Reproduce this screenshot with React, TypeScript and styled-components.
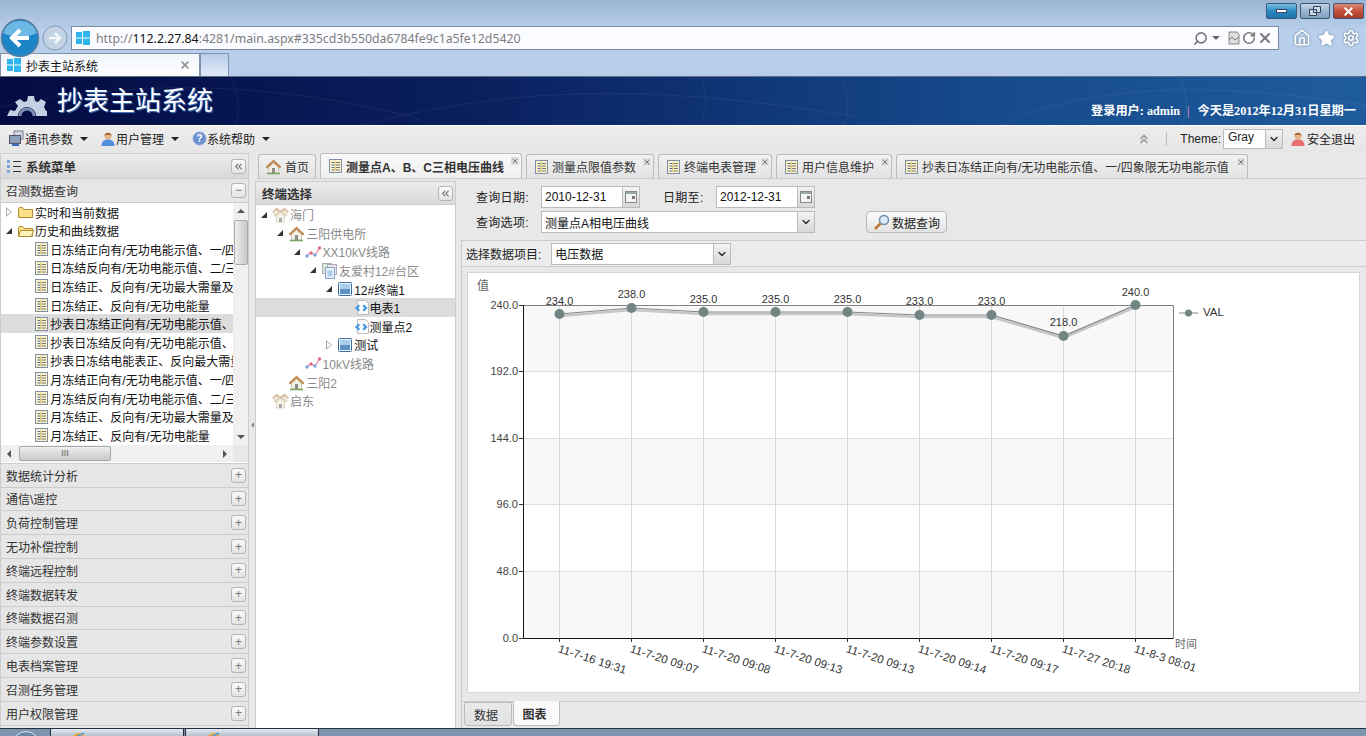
import type { ReactNode } from "react";
import styled, { createGlobalStyle } from "styled-components";
import { ChevronDown, ChevronsLeft, ChevronsUp, Home, RotateCw, Search, Settings, Star, X } from "lucide-react";

const GlobalStyle = createGlobalStyle`
  html, body {
    margin: 0;
    padding: 0;
    background: #e8e8e8;
  }
  * {
    box-sizing: border-box;
  }
  body {
    font-family: "Liberation Sans", "Noto Sans CJK SC", sans-serif;
    font-size: 12px;
    color: #222;
  }
`;

const Page = styled.div`
  width: 1366px;
  height: 736px;
  overflow: hidden;
  display: flex;
  flex-direction: column;
`;

/* ---------- browser frame ---------- */

const Chrome = styled.div`
  height: 77px;
  flex: none;
  background: linear-gradient(#9ab4d3, #b9d0ec 40%, #b7cde9);
  border-bottom: 1px solid #5d6f88;
`;

const TitleRow = styled.div`
  height: 26px;
  display: flex;
  justify-content: flex-end;
  gap: 3px;
  padding: 3px 2px 0 0;
`;

const WinButton = styled.div<{ $tone: string }>`
  width: ${(p) => (p.$tone === "gray" ? "30px" : "31px")};
  height: 16px;
  border: 1px solid #3b5a7a;
  border-radius: 2px;
  display: flex;
  align-items: center;
  justify-content: center;
  background: ${(p) =>
    p.$tone === "red"
      ? "linear-gradient(#dd8a78, #c2523d 50%, #a83a28)"
      : p.$tone === "blue"
        ? "linear-gradient(#7cc1e6, #2a8ac4 50%, #1f6fa8)"
        : "linear-gradient(#c4d5e8, #9db7d2 50%, #7f9dbc)"};
`;

const MinGlyph = styled.span`
  width: 11px;
  height: 4px;
  background: #fff;
  border: 1px solid #446;
`;

const AddressRow = styled.div`
  height: 27px;
  display: flex;
  align-items: flex-start;
  position: relative;
`;

const NavSlot = styled.div`
  width: 71px;
  height: 26px;
  flex: none;
`;

const NavIcons = styled.svg`
  position: absolute;
  left: 0;
  top: -8px;
`;

const AddressBar = styled.div`
  width: 1208px;
  height: 24px;
  background: #fbfcff;
  border: 1px solid #7a8aa0;
  display: flex;
  align-items: center;
  padding: 0 5px 0 4px;
  color: #7d7d7d;
  font-family: "Noto Sans", sans-serif;
  font-size: 12.3px;
`;

const Url = styled.span`
  margin-left: 6px;
  flex: 1;
  b {
    font-weight: 400;
    color: #111;
  }
`;

const BarTools = styled.div`
  display: flex;
  align-items: center;
  gap: 1px;
  color: #777;
`;

const Caret = styled.span`
  width: 0;
  height: 0;
  border: 4px solid transparent;
  border-top-color: #666;
  border-bottom: 0;
  margin: 0 6px 0 3px;
`;

const BrowserTools = styled.div`
  display: flex;
  align-items: center;
  gap: 7px;
  margin-left: 14px;
  height: 24px;
  svg {
    filter: drop-shadow(0 0 1px #5f738c);
  }
`;

const TabRow = styled.div`
  height: 23px;
  display: flex;
  align-items: flex-end;
`;

const BrowserTab = styled.div`
  width: 200px;
  height: 23px;
  background: linear-gradient(#f1f5fb, #fff);
  border: 1px solid #7f93ad;
  border-bottom: 0;
  display: flex;
  align-items: center;
  padding: 0 8px 0 6px;
  gap: 5px;
  color: #111;
  span {
    flex: 1;
  }
`;

const NewTab = styled.div`
  width: 29px;
  height: 23px;
  background: linear-gradient(#b7cde9, #e1ebf7);
  border: 1px solid #7f93ad;
  border-bottom: 0;
`;

/* ---------- application banner ---------- */

const Banner = styled.div`
  height: 48px;
  flex: none;
  background: linear-gradient(90deg, #040c42, #0a1f5e 35%, #15488a 70%, #1f5c9e);
  display: flex;
  align-items: flex-end;
  justify-content: space-between;
  padding: 0 10px 0 7px;
  position: relative;
  overflow: hidden;
`;

const BannerWeb = styled.svg`
  position: absolute;
  inset: 0;
`;

const Brand = styled.div`
  display: flex;
  align-items: flex-end;
  gap: 10px;
  height: 100%;
  position: relative;
`;

const LogoWrap = styled.div`
  margin-bottom: 8px;
  height: 24px;
`;

const BrandTitle = styled.h1`
  margin: 0 0 7px;
  font-size: 26px;
  line-height: 34px;
  font-weight: 400;
  color: #fff;
  text-shadow: 1px 1px 1px #4a7fc4;
`;

const Login = styled.div`
  color: #fff;
  position: relative;
  font-family: "Liberation Serif", "Noto Sans CJK SC", serif;
  font-weight: 700;
  font-size: 12.2px;
  margin-bottom: 6px;
  i {
    font-style: normal;
    font-weight: 400;
    color: #e9a6c0;
    margin: 0 8px 0 7px;
  }
`;

/* ---------- menu bar ---------- */

const MenuBar = styled.div`
  height: 27px;
  flex: none;
  border-top: 1px solid #fff;
  background: linear-gradient(#ededed, #e6e6e6);
  display: flex;
  align-items: center;
  padding: 0 11px 0 8px;
`;

const MenuItem = styled.div`
  display: flex;
  align-items: center;
  width: 92px;
  padding-bottom: 1px;
  color: #222;
  &::after {
    content: "";
    border: 4px solid transparent;
    border-top-color: #222;
    border-bottom: 0;
    margin-left: 7px;
  }
`;

const MenuRight = styled.div`
  margin-left: auto;
  display: flex;
  align-items: center;
  color: #222;
`;

const Separator = styled.span`
  width: 1px;
  height: 14px;
  background: #bbb;
  margin: 0 13px 0 15px;
`;

const ThemeSelect = styled.div`
  width: 60px;
  height: 20px;
  margin: 0 7px 0 2px;
  background: #fff;
  border: 1px solid #bbb;
  display: flex;
  padding-left: 4px;
  line-height: 15px;
  justify-content: space-between;
`;

const ComboArrow = styled.span`
  width: 17px;
  flex: none;
  display: flex;
  align-items: center;
  justify-content: center;
  border-left: 1px solid #bbb;
  background: linear-gradient(#f4f4f4, #d8d8d8);
  color: #333;
`;

const Logout = styled.div`
  display: flex;
  align-items: center;
  gap: 1px;
  padding-bottom: 1px;
`;

/* ---------- body ---------- */

const Body = styled.div`
  height: 576px;
  flex: none;
  display: flex;
  padding-top: 1px;
`;

const West = styled.aside`
  width: 249px;
  flex: none;
  border-right: 1px solid #ccc;
  border-left: 1px solid #ccc;
  display: flex;
  flex-direction: column;
`;

const PanelHead = styled.div<{ $h: number; $pad: number }>`
  height: ${(p) => p.$h}px;
  flex: none;
  display: flex;
  align-items: center;
  padding: 0 2px 0 ${(p) => p.$pad}px;
  background: linear-gradient(#ececec, #d9d9d9);
  border-top: 1px solid #ccc;
  border-bottom: 1px solid #ccc;
  font-weight: 700;
  font-size: 12.5px;
  color: #333;
  gap: 4px;
  span {
    flex: 1;
  }
`;

const SquareBtn = styled.div`
  width: 15px;
  height: 15px;
  border: 1px solid #b5b5b5;
  border-radius: 3px;
  background: linear-gradient(#fbfbfb, #e3e3e3);
  display: flex;
  align-items: center;
  justify-content: center;
  color: #777;
  font-size: 12px;
  line-height: 1;
  font-weight: 400;
`;

const AccordionHead = styled.div`
  height: 23.8px;
  flex: none;
  display: flex;
  align-items: center;
  justify-content: space-between;
  padding: 0 2px 0 5px;
  background: #e6e6e6;
  border-bottom: 1px solid #ccc;
  color: #333;
`;

const AccordionBody = styled.div`
  height: 261px;
  flex: none;
  display: grid;
  grid-template-columns: 232px 15px;
  grid-template-rows: 242px 17px;
  background: #fff;
  border-bottom: 1px solid #ccc;
`;

const ScrollTree = styled.div`
  overflow: hidden;
`;

const TreeRow = styled.div<{ $level: number; $selected?: boolean; $muted?: boolean }>`
  height: 18.6px;
  display: flex;
  align-items: center;
  white-space: nowrap;
  padding-left: ${(p) => p.$level * 16.3}px;
  background: ${(p) => (p.$selected ? "#dcdcdc" : "transparent")};
  color: ${(p) => (p.$muted ? "#8a8a8a" : "#111")};
  svg {
    flex: none;
  }
`;

const Toggle = styled.span<{ $state: "open" | "closed" | "none" }>`
  width: 16px;
  height: 16px;
  flex: none;
  position: relative;
  display: flex;
  align-items: center;
  justify-content: center;
  &::before {
    content: "";
    display: ${(p) => (p.$state === "none" ? "none" : "block")};
    width: 0;
    height: 0;
    ${(p) =>
      p.$state === "open"
        ? "border-left: 6px solid transparent; border-bottom: 6px solid #333;"
        : "border-left: 6px solid #aaa; border-top: 5px solid transparent; border-bottom: 5px solid transparent;"}
  }
  &::after {
    content: "";
    display: ${(p) => (p.$state === "closed" ? "block" : "none")};
    position: absolute;
    left: 6px;
    top: 5px;
    width: 0;
    height: 0;
    border-left: 4px solid #fff;
    border-top: 3px solid transparent;
    border-bottom: 3px solid transparent;
  }
`;

const TreeLabel = styled.span`
  margin-left: 1px;
`;

const VScroll = styled.div`
  background: #f0f0f0;
  position: relative;
`;

const VThumb = styled.div`
  position: absolute;
  top: 17px;
  left: 1px;
  right: 0;
  height: 45px;
  background: linear-gradient(90deg, #eee, #c9c9c9);
  border: 1px solid #aaa;
  border-radius: 2px;
`;

const ArrowCell = styled.span<{ $dir: "up" | "down" | "left" | "right" }>`
  position: absolute;
  width: 0;
  height: 0;
  border: 4px solid transparent;
  ${(p) =>
    p.$dir === "up"
      ? "top: 6px; left: 4px; border-bottom-color: #555; border-top: 0;"
      : p.$dir === "down"
        ? "bottom: 6px; left: 4px; border-top-color: #555; border-bottom: 0;"
        : p.$dir === "left"
          ? "top: 5px; left: 6px; border-right-color: #555; border-left: 0;"
          : "top: 5px; right: 6px; border-left-color: #555; border-right: 0;"}
`;

const HScroll = styled.div`
  background: #f0f0f0;
  position: relative;
`;

const HThumb = styled.div`
  position: absolute;
  left: 18px;
  top: 1px;
  bottom: 1px;
  width: 92px;
  background: linear-gradient(#eee, #c9c9c9);
  border: 1px solid #aaa;
  border-radius: 2px;
  text-align: center;
  font-size: 9px;
  line-height: 13px;
  color: #666;
`;

const Corner = styled.div`
  background: #e8e8e8;
`;

const Splitter = styled.div`
  width: 7px;
  flex: none;
  display: flex;
  align-items: center;
  justify-content: center;
  padding-bottom: 32px;
  &::before {
    content: "";
    border: 3px solid transparent;
    border-right-color: #888;
    border-left: 0;
  }
`;

const Center = styled.main`
  flex: 1;
  min-width: 0;
  display: flex;
  flex-direction: column;
`;

const TabStrip = styled.div`
  height: 26px;
  flex: none;
  display: flex;
  align-items: flex-end;
  gap: 4px;
  padding-left: 2px;
  border-bottom: 1px solid #ccc;
`;

const PageTab = styled.div<{ $w: number; $active?: boolean }>`
  width: ${(p) => p.$w}px;
  height: ${(p) => (p.$active ? 25 : 24)}px;
  flex: none;
  display: flex;
  align-items: center;
  gap: 3px;
  padding-left: 6px;
  position: relative;
  border: 1px solid #bbb;
  border-bottom: 0;
  border-radius: 3px 3px 0 0;
  background: ${(p) => (p.$active ? "linear-gradient(#fafafa, #efefef)" : "linear-gradient(#f2f2f2, #e2e2e2)")};
  font-weight: ${(p) => (p.$active ? 700 : 400)};
  color: #333;
`;

const TabClose = styled.span`
  position: absolute;
  right: 1px;
  top: 2px;
  width: 10px;
  height: 10px;
  border-radius: 2px;
  background: #dcdcdc;
  border: 1px solid #f4f4f4;
  color: #777;
  display: flex;
  align-items: center;
  justify-content: center;
`;

const CenterBody = styled.div`
  flex: 1;
  display: flex;
  min-height: 0;
  padding-top: 2px;
`;

const TerminalPanel = styled.section`
  width: 201px;
  margin-left: -1px;
  flex: none;
  display: flex;
  flex-direction: column;
  border-right: 1px solid #ccc;
  border-left: 1px solid #ccc;
`;

const TerminalTree = styled.div`
  flex: 1;
  background: #fff;
`;

const Content = styled.section`
  flex: 1;
  min-width: 0;
  display: flex;
  flex-direction: column;
  padding-left: 5px;
`;

const QueryForm = styled.div`
  height: 59px;
  flex: none;
  padding: 5px 0 0 15px;
  display: flex;
  flex-direction: column;
  gap: 3px;
`;

const FormRow = styled.div`
  display: flex;
  align-items: center;
  height: 22px;
`;

const FormLabel = styled.label<{ $w: number }>`
  width: ${(p) => p.$w}px;
  flex: none;
  color: #222;
  letter-spacing: 0.3px;
  padding-bottom: 2px;
`;

const Field = styled.div<{ $w: number; $gap?: number }>`
  width: ${(p) => p.$w}px;
  height: 22px;
  flex: none;
  margin-right: ${(p) => p.$gap ?? 0}px;
  border: 1px solid #bbb;
  background: #fff;
  display: flex;
  align-items: center;
  justify-content: space-between;
  padding-left: 3px;
  color: #111;
  overflow: hidden;
`;

const FieldBtn = styled.span`
  width: 17px;
  height: 100%;
  flex: none;
  display: flex;
  align-items: center;
  justify-content: center;
  border-left: 1px solid #bbb;
  background: linear-gradient(#f4f4f4, #d8d8d8);
  color: #333;
`;

const QueryButton = styled.button`
  width: 81px;
  height: 22px;
  margin-left: 51px;
  padding: 0;
  display: flex;
  align-items: center;
  justify-content: center;
  gap: 1px;
  font: inherit;
  color: #222;
  border: 1px solid #b8b8b8;
  border-radius: 4px;
  background: linear-gradient(#fafafa, #e4e4e4);
`;

const ItemBar = styled.div`
  height: 27px;
  flex: none;
  display: flex;
  align-items: center;
  padding-left: 4px;
  gap: 10px;
  background: #ececec;
  border-top: 1px solid #ccc;
  border-left: 1px solid #ccc;
  border-bottom: 1px solid #ccc;
`;

const ChartArea = styled.div`
  flex: 1;
  min-height: 0;
  display: flex;
  padding: 5px 6px 8px 5px;
  border-left: 1px solid #ccc;
  border-bottom: 1px solid #ccc;
`;

const ChartBox = styled.div`
  flex: 1;
  background: #fff;
  border: 1px solid #d6d6d6;
`;

const BottomTabs = styled.div`
  height: 26px;
  flex: none;
  display: flex;
  gap: 1px;
  padding-left: 2px;
  border-left: 1px solid #ccc;
`;

const BottomTab = styled.div<{ $active?: boolean }>`
  width: ${(p) => (p.$active ? 47 : 48)}px;
  height: ${(p) => (p.$active ? 25 : 24)}px;
  margin-top: ${(p) => (p.$active ? -1 : 0)}px;
  padding-right: 4px;
  display: flex;
  align-items: center;
  justify-content: center;
  background: ${(p) => (p.$active ? "#fafafa" : "linear-gradient(#eaeaea, #e2e2e2)")};
  border: 1px solid #bbb;
  border-top: ${(p) => (p.$active ? 0 : "1px solid #bbb")};
  border-radius: 0 0 4px 4px;
  font-weight: ${(p) => (p.$active ? 700 : 400)};
  color: #333;
`;

const TaskBar = styled.div`
  height: 8px;
  flex: none;
  background: #7f94ae;
  border-top: 1px solid #26303c;
  display: flex;
  padding-left: 50px;
  position: relative;
`;

const TaskButton = styled.div`
  width: 134px;
  height: 8px;
  border: 1px solid #26303c;
  border-top: 0;
  background: linear-gradient(#e3e9f0, #b5c1cf);
  margin-right: 1px;
  padding-left: 20px;
  overflow: hidden;
`;

const StartOrb = styled.div`
  position: absolute;
  left: 12px;
  top: 2px;
  width: 28px;
  height: 28px;
  border-radius: 50%;
  border: 1px solid #dfe8f1;
  background: #6a87a8;
`;

/* ---------- drawn icons ---------- */

const WinFlag = () => (
  <svg width="14" height="14" viewBox="0 0 14 14">
    <path d="M0 1h6v5.500H0zM7 0h7v6.500H7zM0 7.500h6V13H0zM7 7.500h7V14H7z" fill="#2fb5ee" />
  </svg>
);

const DocIcon = () => (
  <svg width="16" height="16" viewBox="0 0 16 16">
    <rect x="2.500" y="1.500" width="12" height="13" fill="#fdf3c4" stroke="#7f8ea8" />
    <path d="M4.500 4.500h3M4.500 7h3M4.500 9.500h3M4.500 12h3" stroke="#4a6fa5" />
    <path d="M9 4.500h4M9 7h4M9 9.500h4M9 12h4" stroke="#777" />
    <path d="M8 3v10" stroke="#c9b76c" />
  </svg>
);

const FolderIcon = ({ open }: { open?: boolean }) => (
  <svg width="17" height="16" viewBox="0 0 17 16">
    <path d="M1.500 4.500v9h14v-8H7l-1.500-2h-3z" fill="#fbe08a" stroke="#b08a2e" />
    {open && <path d="M1.500 13.500l2-6h13l-2 6z" fill="#fdf0b8" stroke="#b08a2e" />}
  </svg>
);

const HouseIcon = () => (
  <svg width="17" height="17" viewBox="0 0 17 17">
    <path d="M1 9l7.500-7L16 9l-1.500 1-6-5.500L2.500 10z" fill="#c98e4e" stroke="#a26c32" strokeWidth=".6" />
    <path d="M3.500 9.500l5-4.500 5 4.500V15h-10z" fill="#f3efe5" stroke="#b9b09c" strokeWidth=".6" />
    <rect x="7" y="10" width="3" height="5" fill="#8a8f86" />
    <path d="M2 15.500h13" stroke="#72a35a" strokeWidth="1.500" />
  </svg>
);

const TwinHouseIcon = () => (
  <svg width="17" height="17" viewBox="0 0 17 17" opacity=".75">
    <path d="M0 6l4.500-4.500L8.500 5 12.500 1.500 17 6l-1 .8-3.500-3L8.500 7 4.500 3.800 1 6.800z" fill="#c9a070" />
    <path d="M2 6.500l2.500-2 2.500 2V10H2zM10 6.500l2.500-2 2.500 2V10h-5z" fill="#eee7d8" stroke="#b9b09c" strokeWidth=".5" />
    <path d="M4.500 10.500l4-3.500 4 3.500V16h-8z" fill="#f3efe5" stroke="#b9a98c" strokeWidth=".6" />
    <path d="M3 9.500l5.500-5 5.500 5" fill="none" stroke="#c9a070" />
    <rect x="7" y="12" width="3" height="4" fill="#8a8f86" />
  </svg>
);

const LineIcon = () => (
  <svg width="17" height="16" viewBox="0 0 17 16">
    <path d="M1 12l5-3 4 2 5-8" fill="none" stroke="#e58aa6" strokeWidth="1.200" />
    <circle cx="2" cy="12" r="1.700" fill="#7aa4dc" />
    <circle cx="6" cy="9" r="1.700" fill="#e0688c" />
    <circle cx="10" cy="11" r="1.700" fill="#7aa4dc" />
    <circle cx="14.500" cy="4" r="1.700" fill="#e0688c" />
  </svg>
);

const StationIcon = () => (
  <svg width="17" height="17" viewBox="0 0 17 17" opacity=".8">
    <rect x="1.500" y="1.500" width="9" height="10" fill="#d4e6cf" stroke="#99a" />
    <rect x="6.500" y="2.500" width="9" height="10" fill="#eadbe6" stroke="#99a" />
    <rect x="4.500" y="5.500" width="9" height="11" fill="#e3eefa" stroke="#6d8fb8" />
    <rect x="6.500" y="8.500" width="5" height="6" fill="#9cc0e6" />
  </svg>
);

const TerminalIcon = () => (
  <svg width="16" height="16" viewBox="0 0 16 16">
    <rect x="1.500" y="1.500" width="13" height="13" rx="1" fill="#eaf2fa" stroke="#3f6ea3" />
    <rect x="3" y="3" width="10" height="10" fill="#a9cdea" />
    <rect x="3" y="8" width="10" height="5" fill="#5e93c8" />
  </svg>
);

const MeterIcon = () => (
  <svg width="15" height="17" viewBox="0 0 15 17">
    <path d="M3.500 1.500h8l3 3v11h-11z" fill="#fcfcfc" stroke="#bdbdbd" />
    <path d="M4.500 5.500L1 9l3.500 3.500L6 11 4 9l2-2zM10 5.500L13.500 9 10 12.500 8.500 11l2-2-2-2z" fill="#3f93e0" />
  </svg>
);

const TreeGlyph = () => (
  <svg width="16" height="16" viewBox="0 0 16 16">
    <path d="M1 2h3v3H1zM1 7h3v3H1zM1 12h3v3H1z" fill="#7aa8dc" />
    <path d="M7 3.500h8M7 8.500h8M7 13.500h8" stroke="#333" />
  </svg>
);

const GearLogo = () => (
  <svg width="40" height="24" viewBox="0 0 40 24">
    <path
      d="M0 22l3-6 5 1 3-5-3-4 5-3 4 3 3-1 1-5h6l1 5 3 1 3-3 5 3-2 5 2 4 5-1 1 6H29a9 9 0 0 0-18 0z"
      fill="#c5cfe2"
      transform="translate(0 1)"
    />
    <path d="M13 23a7 7 0 0 1 14 0" fill="none" stroke="#7e8fb4" strokeWidth="3" />
  </svg>
);

const NetIcon = () => (
  <svg width="17" height="17" viewBox="0 0 17 17">
    <rect x="6" y="1" width="9" height="8" fill="#cfd8e0" stroke="#778" />
    <rect x="1.500" y="5.500" width="11" height="8" fill="#8aa0b8" stroke="#556" />
    <path d="M4 15h7" stroke="#3a6ec2" strokeWidth="2" />
  </svg>
);

const UserIcon = ({ tone }: { tone: string }) => (
  <svg width="16" height="16" viewBox="0 0 16 16">
    <circle cx="8" cy="5" r="3.600" fill="#e7b58c" />
    <path d="M4.400 4.500C5 1 11 1 11.600 4.500 9 3 7 3 4.400 4.500z" fill="#8a4a22" />
    <path d="M1.500 15c0-5 3-6.500 6.500-6.500s6.500 1.500 6.500 6.500z" fill={tone} />
  </svg>
);

const HelpIcon = () => (
  <svg width="15" height="15" viewBox="0 0 15 15">
    <circle cx="7.500" cy="7.500" r="6.500" fill="#6d8fd0" stroke="#8fa9d8" />
    <text x="7.500" y="11" textAnchor="middle" fontSize="10" fontWeight="700" fill="#fff" fontFamily="Liberation Sans">?</text>
  </svg>
);

const Calendar = () => (
  <svg width="12" height="12" viewBox="0 0 12 12">
    <rect x=".5" y=".5" width="11" height="11" fill="#f4f4f4" stroke="#888" />
    <rect x="1" y="1" width="10" height="2" fill="#9aa" />
    <rect x="7" y="5" width="3" height="3" fill="#777" />
  </svg>
);

const Magnifier = () => (
  <svg width="18" height="18" viewBox="0 0 18 18">
    <circle cx="11" cy="7" r="4.500" fill="#dcecf9" stroke="#6f8fae" strokeWidth="1.500" />
    <path d="M7.500 10.500L2 16" stroke="#b5762f" strokeWidth="2.500" />
  </svg>
);

const IeSwirl = () => (
  <svg width="16" height="8" viewBox="0 0 16 8">
    <ellipse cx="8" cy="8" rx="6" ry="6" fill="none" stroke="#e9a52f" strokeWidth="2" />
    <path d="M3 6l10-5" stroke="#4a9adf" strokeWidth="1.500" />
  </svg>
);

/* ---------- chart ---------- */

const xs = [559.5, 631.5, 703.5, 775.5, 847.5, 919.5, 991.5, 1063.5, 1135.5];
const ys = [314, 308, 312, 312, 312, 315, 315, 336, 305];
const vals = ["234.0", "238.0", "235.0", "235.0", "235.0", "233.0", "233.0", "218.0", "240.0"];
const labelY = [300.5, 294, 299, 299, 299, 301, 301, 322, 292];
const times = [
  "11-7-16 19:31",
  "11-7-20 09:07",
  "11-7-20 09:08",
  "11-7-20 09:13",
  "11-7-20 09:13",
  "11-7-20 09:14",
  "11-7-20 09:17",
  "11-7-27 20:18",
  "11-8-3 08:01",
];
const ticks = [
  { y: 305, label: "240.0" },
  { y: 371, label: "192.0" },
  { y: 438, label: "144.0" },
  { y: 504, label: "96.0" },
  { y: 571, label: "48.0" },
  { y: 638, label: "0.0" },
];

function VoltageChart() {
  const line = xs.map((x, i) => `${x},${ys[i]}`).join(" ");
  const shadow = xs.map((x, i) => `${x},${ys[i] + 2}`).join(" ");
  return (
    <svg width="890" height="419" viewBox="468 273 890 419" fontFamily="Liberation Sans, Noto Sans CJK SC" fontSize="11" fill="#333">
      <rect x="523" y="305" width="650" height="66" fill="#f8f8f8" />
      <rect x="523" y="438" width="650" height="66" fill="#f8f8f8" />
      <rect x="523" y="571" width="650" height="67" fill="#f8f8f8" />
      {ticks.slice(1, 5).map((t) => (
        <line key={t.y} x1="523" x2="1173" y1={t.y + 0.5} y2={t.y + 0.5} stroke="#ddd" />
      ))}
      {xs.map((x) => (
        <line key={x} x1={x} x2={x} y1="305" y2="638" stroke="#d8d8d8" />
      ))}
      <path d="M523 305.500H1173.500V638" fill="none" stroke="#808080" />
      <path d="M523.500 305V638.500H1173.500" fill="none" stroke="#111" />
      {ticks.map((t) => (
        <g key={t.label}>
          <line x1="519" x2="523" y1={t.y + 0.5} y2={t.y + 0.5} stroke="#333" />
          <text x="518" y={t.y + 4} textAnchor="end" fill="#444">{t.label}</text>
        </g>
      ))}
      {xs.map((x, i) => (
        <g key={i}>
          <line x1={x} x2={x} y1="638" y2="642" stroke="#333" />
          <text x={x - 2} y="652" fontSize="11.5" transform={`rotate(18 ${x - 2} 652)`}>{times[i]}</text>
        </g>
      ))}
      <polyline points={shadow} fill="none" stroke="#c6c6c6" strokeWidth="2.500" />
      <polyline points={line} fill="none" stroke="#808a8a" strokeWidth="1.200" />
      {xs.map((x, i) => (
        <g key={i}>
          <circle cx={x} cy={ys[i]} r="5" fill="#728584" />
          <text x={x} y={labelY[i] + 4} textAnchor="middle">{vals[i]}</text>
        </g>
      ))}
      <text x="477" y="290" fontSize="12" fill="#666">值</text>
      <text x="1175" y="648" fontSize="11" fill="#666">时间</text>
      <line x1="1179" x2="1198" y1="313" y2="313" stroke="#808a8a" />
      <circle cx="1188.500" cy="313" r="3.500" fill="#728584" />
      <text x="1203" y="316" fontSize="11.500">VAL</text>
    </svg>
  );
}

/* ---------- data ---------- */

const westTree = [
  "日冻结正向有/无功电能示值、一/四象限无功电能示值",
  "日冻结反向有/无功电能示值、二/三象限无功电能示值",
  "日冻结正、反向有/无功最大需量及发生时间",
  "日冻结正、反向有/无功电能量",
  "抄表日冻结正向有/无功电能示值、一/四象限无功电能示值",
  "抄表日冻结反向有/无功电能示值、二/三象限无功电能示值",
  "抄表日冻结电能表正、反向最大需量及发生时间",
  "月冻结正向有/无功电能示值、一/四象限无功电能示值",
  "月冻结反向有/无功电能示值、二/三象限无功电能示值",
  "月冻结正、反向有/无功最大需量及发生时间",
  "月冻结正、反向有/无功电能量",
];

const groups = [
  "数据统计分析",
  "通信\\遥控",
  "负荷控制管理",
  "无功补偿控制",
  "终端远程控制",
  "终端数据转发",
  "终端数据召测",
  "终端参数设置",
  "电表档案管理",
  "召测任务管理",
  "用户权限管理",
];

const pageTabs = [
  { w: 202, label: "测量点A、B、C三相电压曲线", active: true },
  { w: 128, label: "测量点限值参数" },
  { w: 114, label: "终端电表管理" },
  { w: 116, label: "用户信息维护" },
  { w: 352, label: "抄表日冻结正向有/无功电能示值、一/四象限无功电能示值" },
];

type Node = {
  level: number;
  label: string;
  icon: ReactNode;
  toggle: "open" | "closed" | "none";
  muted?: boolean;
  selected?: boolean;
};

const terminalTree: Node[] = [
  { level: 0, label: "海门", icon: <TwinHouseIcon />, toggle: "open", muted: true },
  { level: 1, label: "三阳供电所", icon: <HouseIcon />, toggle: "open", muted: true },
  { level: 2, label: "XX10kV线路", icon: <LineIcon />, toggle: "open", muted: true },
  { level: 3, label: "友爱村12#台区", icon: <StationIcon />, toggle: "open", muted: true },
  { level: 4, label: "12#终端1", icon: <TerminalIcon />, toggle: "open" },
  { level: 5, label: "电表1", icon: <MeterIcon />, toggle: "none", selected: true },
  { level: 5, label: "测量点2", icon: <MeterIcon />, toggle: "none" },
  { level: 4, label: "测试", icon: <TerminalIcon />, toggle: "closed" },
  { level: 2, label: "10kV线路", icon: <LineIcon />, toggle: "none", muted: true },
  { level: 1, label: "三阳2", icon: <HouseIcon />, toggle: "none", muted: true },
  { level: 0, label: "启东", icon: <TwinHouseIcon />, toggle: "none", muted: true },
];

function App() {
  return (
    <Page>
      <GlobalStyle />
      <Chrome>
        <TitleRow>
          <WinButton $tone="blue"><MinGlyph /></WinButton>
          <WinButton $tone="gray">
            <svg width="14" height="11" viewBox="0 0 14 11">
              <path d="M5.500.5h7v6h-7zM1.500 3.500h7v6h-7z" fill="#c9d8e8" stroke="#345" />
            </svg>
          </WinButton>
          <WinButton $tone="red"><X size={13} strokeWidth={3.5} color="#fff" /></WinButton>
        </TitleRow>
        <AddressRow>
          <NavSlot />
          <NavIcons width="71" height="40" viewBox="0 0 71 40">
            <circle cx="55" cy="20" r="12" fill="#c3d3e6" stroke="#8497ad" />
            <path d="M49 20h10M55 15l5 5-5 5" fill="none" stroke="#f3f6fa" strokeWidth="2.500" />
            <circle cx="20" cy="20" r="18.500" fill="#1a86c8" stroke="#5f7d9c" strokeWidth="1.500" />
            <path d="M3 15a18 18 0 0 1 34 0 40 40 0 0 1-34 0z" fill="#6cb9e6" />
            <path d="M29 20H13M20 12l-8 8 8 8" fill="none" stroke="#fff" strokeWidth="4" />
          </NavIcons>
          <AddressBar>
            <WinFlag />
            <Url>http://<b>112.2.27.84</b>:4281/main.aspx#335cd3b550da6784fe9c1a5fe12d5420</Url>
            <BarTools>
              <Search size={15} strokeWidth={2.5} style={{ transform: "scaleX(-1)" }} />
              <Caret />
              <svg width="14" height="14" viewBox="0 0 14 14">
                <path d="M2 1h8l2 2v10H2z" fill="#ddd" stroke="#888" />
                <path d="M2 9l3-3 3 3 4-3" fill="none" stroke="#777" />
              </svg>
              <RotateCw size={14} strokeWidth={2.8} />
              <X size={16} strokeWidth={2.8} />
            </BarTools>
          </AddressBar>
          <BrowserTools>
            <Home size={18} color="#fff" strokeWidth={2.2} />
            <Star size={17} color="#fff" fill="#fff" />
            <Settings size={18} color="#fff" strokeWidth={2.2} />
          </BrowserTools>
        </AddressRow>
        <TabRow>
          <BrowserTab>
            <WinFlag />
            <span>抄表主站系统</span>
            <X size={12} strokeWidth={3} color="#888" />
          </BrowserTab>
          <NewTab />
        </TabRow>
      </Chrome>

      <Banner>
        <BannerWeb width="1366" height="48" viewBox="0 0 1366 48" fill="none" stroke="#fff" strokeOpacity=".06">
          <path d="M0 30C120 5 260 0 420 42M230 0c10 20 10 35 5 48M700 0c8 16 8 32 0 48M360 48C520 10 640 5 860 40M840 0c10 16 10 32 4 48M1000 48c90-40 200-45 366-20M1180 0c8 16 8 32 2 48" />
        </BannerWeb>
        <Brand>
          <LogoWrap><GearLogo /></LogoWrap>
          <BrandTitle>抄表主站系统</BrandTitle>
        </Brand>
        <Login>登录用户: admin<i>|</i>今天是2012年12月31日星期一</Login>
      </Banner>

      <MenuBar>
        <MenuItem><NetIcon />通讯参数</MenuItem>
        <MenuItem><UserIcon tone="#4f8fdc" />用户管理</MenuItem>
        <MenuItem><HelpIcon />系统帮助</MenuItem>
        <MenuRight>
          <ChevronsUp size={14} color="#999" strokeWidth={3} />
          <Separator />
          Theme:
          <ThemeSelect>
            Gray
            <ComboArrow><ChevronDown size={12} strokeWidth={3} /></ComboArrow>
          </ThemeSelect>
          <Logout><UserIcon tone="#e86f6f" />安全退出</Logout>
        </MenuRight>
      </MenuBar>

      <Body>
        <West>
          <PanelHead $h={26} $pad={5}>
            <TreeGlyph />
            <span>系统菜单</span>
            <SquareBtn><ChevronsLeft size={11} strokeWidth={2.5} /></SquareBtn>
          </PanelHead>
          <AccordionHead>
            召测数据查询
            <SquareBtn>−</SquareBtn>
          </AccordionHead>
          <AccordionBody>
            <ScrollTree>
              <TreeRow $level={0}>
                <Toggle $state="closed" />
                <FolderIcon />
                <TreeLabel>实时和当前数据</TreeLabel>
              </TreeRow>
              <TreeRow $level={0}>
                <Toggle $state="open" />
                <FolderIcon open />
                <TreeLabel>历史和曲线数据</TreeLabel>
              </TreeRow>
              {westTree.map((label, i) => (
                <TreeRow key={label} $level={1} $selected={i === 4}>
                  <Toggle $state="none" />
                  <DocIcon />
                  <TreeLabel>{label}</TreeLabel>
                </TreeRow>
              ))}
            </ScrollTree>
            <VScroll>
              <ArrowCell $dir="up" />
              <VThumb />
              <ArrowCell $dir="down" />
            </VScroll>
            <HScroll>
              <ArrowCell $dir="left" />
              <HThumb>III</HThumb>
              <ArrowCell $dir="right" />
            </HScroll>
            <Corner />
          </AccordionBody>
          {groups.map((g) => (
            <AccordionHead key={g}>
              {g}
              <SquareBtn>+</SquareBtn>
            </AccordionHead>
          ))}
        </West>
        <Splitter />
        <Center>
          <TabStrip>
            <PageTab $w={58}>
              <HouseIcon />
              首页
            </PageTab>
            {pageTabs.map((t) => (
              <PageTab key={t.label} $w={t.w} $active={t.active}>
                <DocIcon />
                {t.label}
                <TabClose><X size={8} strokeWidth={3} /></TabClose>
              </PageTab>
            ))}
          </TabStrip>
          <CenterBody>
            <TerminalPanel>
              <PanelHead $h={24.4} $pad={6}>
                <span>终端选择</span>
                <SquareBtn><ChevronsLeft size={11} strokeWidth={2.5} /></SquareBtn>
              </PanelHead>
              <TerminalTree>
                {terminalTree.map((n) => (
                  <TreeRow key={n.label} $level={n.level} $muted={n.muted} $selected={n.selected}>
                    <Toggle $state={n.toggle} />
                    {n.icon}
                    <TreeLabel>{n.label}</TreeLabel>
                  </TreeRow>
                ))}
              </TerminalTree>
            </TerminalPanel>
            <Content>
              <QueryForm>
                <FormRow>
                  <FormLabel $w={65}>查询日期:</FormLabel>
                  <Field $w={99} $gap={23}>
                    2010-12-31
                    <FieldBtn><Calendar /></FieldBtn>
                  </Field>
                  <FormLabel $w={53}>日期至:</FormLabel>
                  <Field $w={99}>
                    2012-12-31
                    <FieldBtn><Calendar /></FieldBtn>
                  </Field>
                </FormRow>
                <FormRow>
                  <FormLabel $w={65}>查询选项:</FormLabel>
                  <Field $w={274}>
                    测量点A相电压曲线
                    <FieldBtn><ChevronDown size={12} strokeWidth={3} /></FieldBtn>
                  </Field>
                  <QueryButton><Magnifier />数据查询</QueryButton>
                </FormRow>
              </QueryForm>
              <ItemBar>
                选择数据项目:
                <Field $w={180}>
                  电压数据
                  <FieldBtn><ChevronDown size={12} strokeWidth={3} /></FieldBtn>
                </Field>
              </ItemBar>
              <ChartArea>
                <ChartBox>
                  <VoltageChart />
                </ChartBox>
              </ChartArea>
              <BottomTabs>
                <BottomTab>数据</BottomTab>
                <BottomTab $active>图表</BottomTab>
              </BottomTabs>
            </Content>
          </CenterBody>
        </Center>
      </Body>

      <TaskBar>
        <StartOrb />
        <TaskButton><IeSwirl /></TaskButton>
        <TaskButton><IeSwirl /></TaskButton>
      </TaskBar>
    </Page>
  );
}

export default App;
